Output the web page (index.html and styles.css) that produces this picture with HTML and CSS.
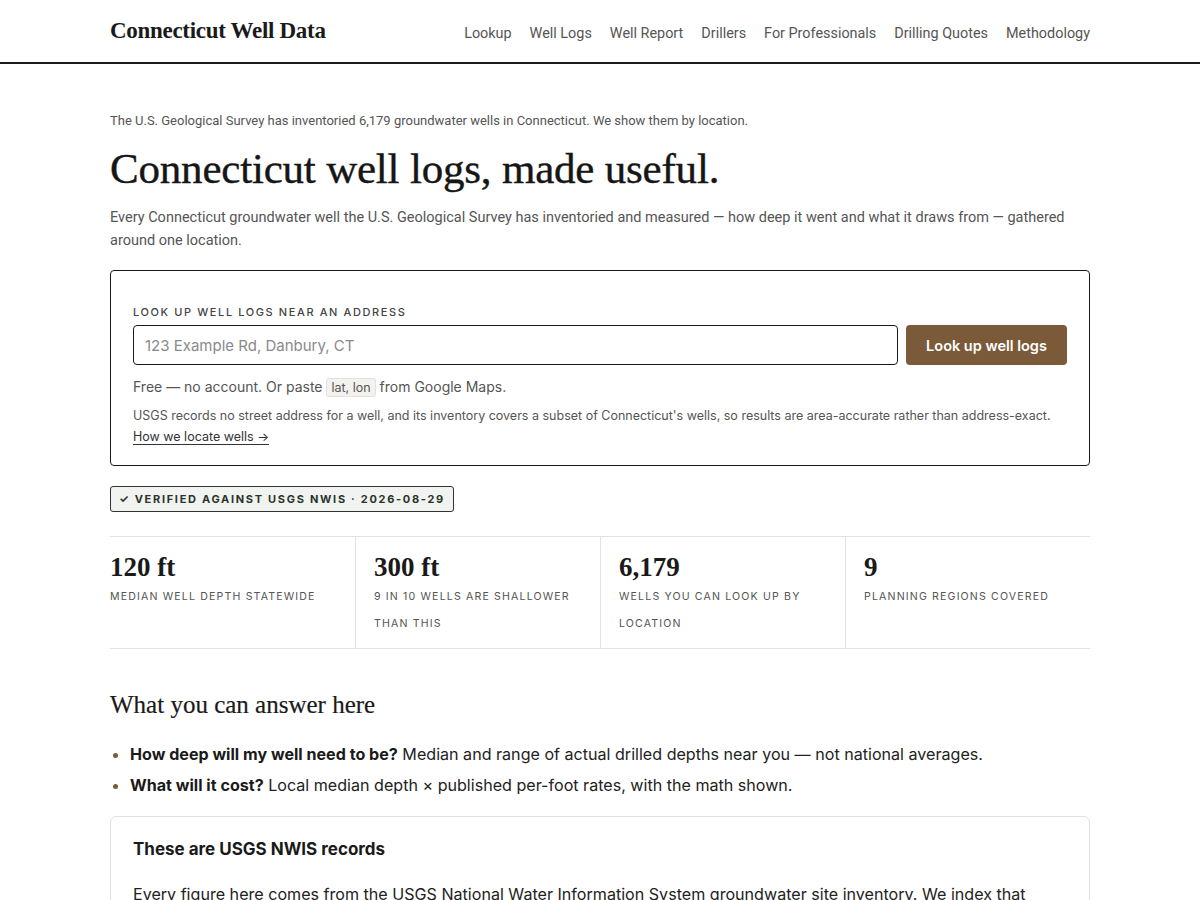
FILE: index.html
```html
<!DOCTYPE html>
<html lang="en">
<head>
<meta charset="utf-8">
<title>Connecticut Well Data</title>
<link rel="stylesheet" href="styles.css">
</head>
<body>
<header class="site-header">
  <div class="wrap header-inner">
    <a class="logo" href="#">Connecticut Well Data</a>
    <nav class="nav">
      <a href="#">Lookup</a>
      <a href="#">Well Logs</a>
      <a href="#">Well Report</a>
      <a href="#">Drillers</a>
      <a href="#">For Professionals</a>
      <a href="#">Drilling Quotes</a>
      <a href="#">Methodology</a>
    </nav>
  </div>
</header>
<main class="wrap main">
  <p class="kicker">The U.S. Geological Survey has inventoried 6,179 groundwater wells in Connecticut. We show them by location.</p>
  <h1 class="title">Connecticut well logs, made useful.</h1>
  <p class="lead">Every Connecticut groundwater well the U.S. Geological Survey has inventoried and measured — how deep it went and what it draws from — gathered around one location.</p>

  <section class="search-card">
    <label class="search-label" for="addr">Look up well logs near an address</label>
    <div class="search-row">
      <input id="addr" class="search-input" type="text" placeholder="123 Example Rd, Danbury, CT">
      <button class="search-btn" type="button">Look up well logs</button>
    </div>
    <p class="search-hint">Free — no account. Or paste <code class="chip">lat, lon</code> from Google Maps.</p>
    <p class="search-note">USGS records no street address for a well, and its inventory covers a subset of Connecticut's wells, so results are area-accurate rather than address-exact.<br><a href="#" class="note-link">How we locate wells →</a></p>
  </section>

  <div class="badge">✓ Verified against USGS NWIS · 2026-08-29</div>

  <section class="stats">
    <div class="stat">
      <div class="stat-num">120 ft</div>
      <div class="stat-label">Median well depth statewide</div>
    </div>
    <div class="stat">
      <div class="stat-num">300 ft</div>
      <div class="stat-label">9 in 10 wells are shallower than this</div>
    </div>
    <div class="stat">
      <div class="stat-num">6,179</div>
      <div class="stat-label">Wells you can look up by location</div>
    </div>
    <div class="stat">
      <div class="stat-num">9</div>
      <div class="stat-label">Planning regions covered</div>
    </div>
  </section>

  <h2 class="section-title">What you can answer here</h2>
  <ul class="answers">
    <li><strong>How deep will my well need to be?</strong> Median and range of actual drilled depths near you — not national averages.</li>
    <li><strong>What will it cost?</strong> Local median depth × published per-foot rates, with the math shown.</li>
  </ul>

  <section class="info-card">
    <h3 class="info-title">These are USGS NWIS records</h3>
    <p class="info-text">Every figure here comes from the USGS National Water Information System groundwater site inventory. We index that inventory by location so you can see the wells around an address.</p>
  </section>
</main>
</body>
</html>
```

FILE: styles.css
```css
* { box-sizing: border-box; }
html, body { margin: 0; padding: 0; background: #fff; }
body {
  font-family: "Inter", "Roboto", "Liberation Sans", sans-serif;
  color: #1c1c1c;
}
a { color: inherit; text-decoration: none; }
.wrap { width: 980px; margin: 0 auto; }

.site-header {
  border-bottom: 2px solid #1a1a1a;
  height: 64px;
}
.header-inner {
  height: 62px;
  display: flex;
  align-items: center;
  justify-content: space-between;
}
.logo {
  font-family: "Liberation Serif", serif;
  font-weight: 700;
  font-size: 23px;
  color: #1a1a1a;
  letter-spacing: -0.3px;
}
.nav {
  display: flex;
  gap: 18px;
  font-family: "Roboto", "Liberation Sans", sans-serif;
  font-size: 14.4px;
  color: #555;
  margin-top: 4px;
}

.main { padding-top: 48px; }
.kicker {
  margin: 0;
  font-family: "Roboto", sans-serif;
  font-size: 13px;
  color: #555;
  line-height: 18px;
}
.title {
  margin: 12px 0 0;
  font-family: "Liberation Serif", serif;
  font-weight: 400;
  font-size: 43px;
  line-height: 54px;
  color: #161616;
  letter-spacing: -0.2px;
  -webkit-text-stroke: 0.4px #161616;
}
.lead {
  margin: 10px 0 0;
  font-family: "Roboto", sans-serif;
  font-size: 14.5px;
  line-height: 23px;
  color: #555;
}

.search-card {
  margin-top: 18px;
  border: 1px solid #1a1a1a;
  border-radius: 4px;
  padding: 34px 22px 18px;
}
.search-label {
  display: block;
  font-size: 11px;
  font-weight: 500;
  letter-spacing: 1.6px;
  text-transform: uppercase;
  color: #444;
  line-height: 14px;
}
.search-row {
  display: flex;
  gap: 8px;
  margin-top: 6px;
}
.search-input {
  flex: 1;
  height: 40px;
  border: 1px solid #1a1a1a;
  border-radius: 4px;
  padding: 0 11px;
  font-family: inherit;
  font-size: 15px;
  color: #1c1c1c;
}
.search-input::placeholder { color: #8a8a8a; }
.search-btn {
  width: 161px;
  height: 40px;
  border: 0;
  border-radius: 4px;
  background: #7a5a39;
  color: #fff;
  font-family: inherit;
  font-size: 14.5px;
  font-weight: 600;
}
.search-hint {
  margin: 11px 0 0;
  font-size: 14px;
  line-height: 22px;
  color: #555;
}
.chip {
  font-family: inherit;
  font-size: 12.5px;
  background: #f4f2ee;
  border: 1px solid #e4e1db;
  border-radius: 3px;
  padding: 1px 4px;
  color: #555;
}
.search-note {
  margin: 6px 0 0;
  font-size: 12.5px;
  line-height: 21px;
  color: #555;
  white-space: nowrap;
}
.note-link {
  color: #333;
  border-bottom: 1px solid #333;
}

.badge {
  display: inline-block;
  margin-top: 20px;
  border: 1px solid #333;
  border-radius: 3px;
  background: #f1f3f0;
  padding: 5px 8px 4px;
  font-size: 11px;
  font-weight: 700;
  letter-spacing: 1.7px;
  text-transform: uppercase;
  color: #2a332a;
  line-height: 15px;
}

.stats {
  margin-top: 24px;
  display: grid;
  grid-template-columns: repeat(4, 1fr);
  border-top: 1px solid #e2e2e2;
  border-bottom: 1px solid #e2e2e2;
}
.stat {
  padding: 14px 18px 11px;
  border-left: 1px solid #e2e2e2;
}
.stat:first-child { padding-left: 0; border-left: 0; }
.stat-num {
  font-family: "Liberation Serif", serif;
  font-weight: 700;
  font-size: 27px;
  line-height: 32px;
  color: #1a1a1a;
}
.stat-label {
  font-size: 10.6px;
  letter-spacing: 1.15px;
  text-transform: uppercase;
  color: #555;
  line-height: 27px;
}

.section-title {
  margin: 39px 0 0;
  font-family: "Liberation Serif", serif;
  font-weight: 400;
  font-size: 25px;
  line-height: 34px;
  color: #1a1a1a;
  -webkit-text-stroke: 0.2px #1a1a1a;
}
.answers {
  margin: 17px 0 0;
  padding-left: 20px;
  font-size: 16.1px;
  line-height: 31px;
  color: #222;
}
.answers li::marker { color: #7a5a39; }
.answers strong { font-weight: 700; color: #1a1a1a; }

.info-card {
  margin-top: 15px;
  border: 1px solid #e0e0e0;
  border-radius: 6px;
  padding: 20px 22px;
}
.info-title {
  margin: 0;
  font-size: 17px;
  font-weight: 700;
  line-height: 24px;
  color: #1a1a1a;
}
.info-text {
  margin: 19px 0 0;
  font-size: 16.1px;
  line-height: 28px;
  color: #222;
}
```
